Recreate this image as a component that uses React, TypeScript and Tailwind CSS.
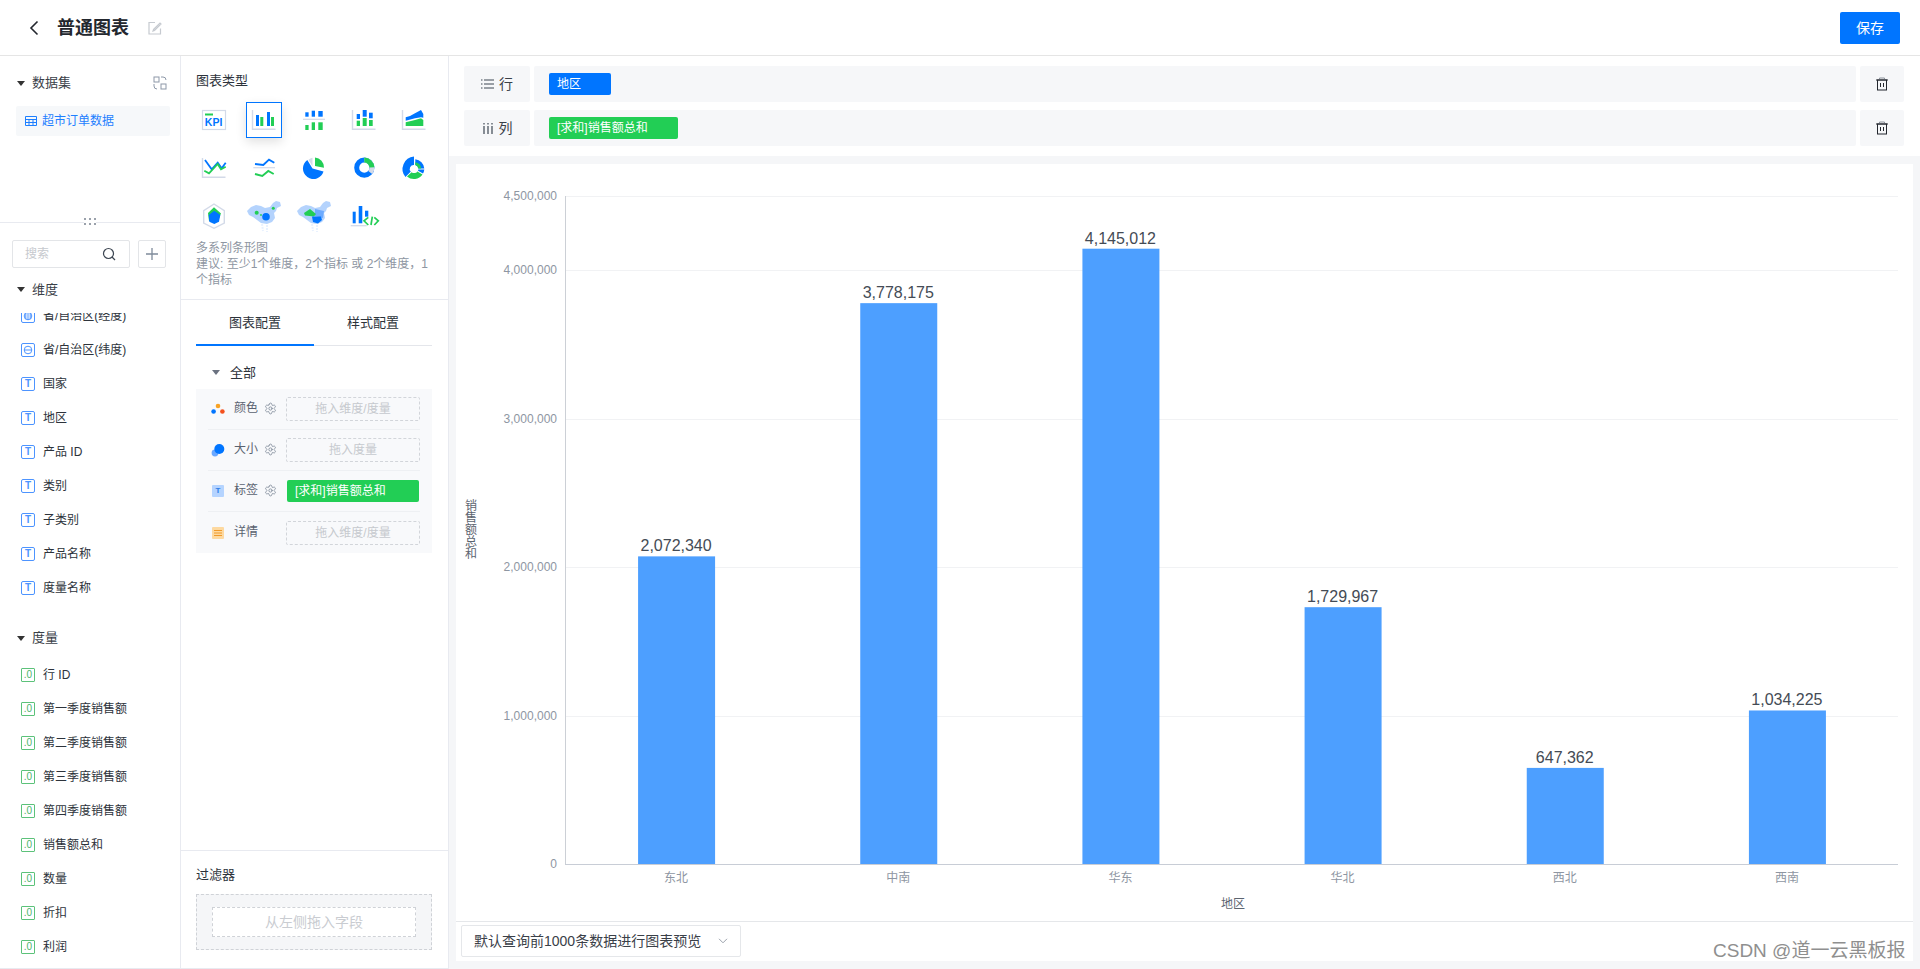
import React from "react";
import { Settings } from "lucide-react";

const B = "#0075ff";
const G = "#22ce55";
const L = "#d3dae8";

function Axis() {
  return <path d="M5.5 6V25.3H28.5" fill="none" stroke={L} strokeWidth="1.4" />;
}

const mapPath = "M0 11L4 7L9 5L14 6L18 8L23 7L26 3L29 1L33 2L34 6L30 8L29 11L27 13L28 18L25 22L20 24L14 23L10 20L6 17L2 15Z";

const chartIcons: React.ReactNode[] = [
  <>
    <rect x="5.5" y="6.5" width="23" height="19" fill="#fff" stroke={L} strokeWidth="1.2" />
    <rect x="8" y="9.5" width="8" height="2" fill={G} />
    <text x="7.8" y="22" fontSize="10.5" fontWeight="700" fill={B} fontFamily="Liberation Sans, sans-serif">KPI</text>
  </>,
  <>
    <Axis />
    <rect x="9" y="11" width="3" height="11" fill={B} />
    <rect x="13.3" y="13" width="3" height="9" fill={G} />
    <rect x="20" y="8" width="3" height="14" fill={B} />
    <rect x="24" y="13" width="3" height="9" fill={G} />
  </>,
  <>
    <rect x="8.3" y="8.3" width="3.3" height="4.4" fill={B} />
    <rect x="14.7" y="6.7" width="3.3" height="6" fill={B} />
    <rect x="21.3" y="7" width="4.4" height="5.7" fill={B} />
    <path d="M6 15.3H28" stroke={L} strokeWidth="1.2" />
    <rect x="8.3" y="21" width="3.3" height="5" fill={G} />
    <rect x="14.7" y="18.3" width="3.3" height="7.7" fill={G} />
    <rect x="21.3" y="18.3" width="4.4" height="7.7" fill={G} />
  </>,
  <>
    <Axis />
    <rect x="9.7" y="10" width="3.3" height="5" fill={B} />
    <rect x="9.7" y="16.7" width="3.3" height="5.3" fill={G} />
    <rect x="15.7" y="6" width="4" height="6.7" fill={B} />
    <rect x="15.7" y="14" width="4" height="8" fill={G} />
    <rect x="22" y="8.7" width="3.7" height="5.6" fill={B} />
    <rect x="22" y="16" width="3.7" height="6" fill={G} />
  </>,
  <>
    <Axis />
    <path d="M8.7 13.3L13 12L18 9.3L24 6L26.3 10V13.7L24 13.3L18 14.3L8.7 16.7Z" fill={B} />
    <path d="M8.7 18.3L18 16L24 14.3L26.3 16V22H8.7Z" fill={G} />
  </>,
  <>
    <Axis />
    <path d="M8 8L14.7 17.3L20.7 10.7L24.7 16.3L28.7 10.7" fill="none" stroke={B} strokeWidth="1.8" />
    <path d="M7.3 18.7L12 21.3L20.7 12L24 17.3L28.7 14.7" fill="none" stroke={G} strokeWidth="1.8" />
  </>,
  <>
    <path d="M8 12L16.3 13L22 7.6L27.3 10.7" fill="none" stroke={B} strokeWidth="1.9" />
    <path d="M6.3 15.7H28" stroke={L} strokeWidth="1.2" />
    <path d="M8 22L15.3 24L21.3 19L26.7 22" fill="none" stroke={G} strokeWidth="1.9" />
  </>,
  <>
    <path d="M15.5 14.5L11.5 7.7A10 10 0 0 1 15.5 5.7Z" fill={L} />
    <path d="M18 14V5.5A10 10 0 0 1 27 15.7Z" fill={G} />
    <path d="M15.5 16.5L26.5 19.5A10.5 10.5 0 1 1 10.3 8Z" fill={B} />
  </>,
  <>
    <g transform="rotate(-90 17.3 15.7)" fill="none" strokeWidth="5">
      <circle cx="17.3" cy="15.7" r="7.6" stroke={B} />
      <circle cx="17.3" cy="15.7" r="7.6" stroke={L} strokeDasharray="17 47.8" />
      <circle cx="17.3" cy="15.7" r="7.6" stroke={G} strokeDasharray="11.5 47.8" />
    </g>
  </>,
  <>
    <path d="M17 4.5A12.5 12.5 0 0 0 8.5 25L13.8 19.6A4 4 0 0 1 17 12.9Z" fill={B} />
    <path d="M10 24.5A10.5 10.5 0 0 0 25.5 22.5L20.4 19.4A4 4 0 0 1 14.6 20.2Z" fill={G} />
    <path d="M18.3 7.3A10 10 0 0 1 27.3 16.5H21.3A4 4 0 0 0 18.3 13Z" fill={B} />
    <path d="M18.3 10.3A7 7 0 0 1 24.2 16.5H21.3A4 4 0 0 0 18.3 13Z" fill={G} />
    <path d="M27.3 17.5A10 10 0 0 1 26 21.5L21 18.7A4 4 0 0 0 21.3 17.5Z" fill={B} />
  </>,
  <>
    <path d="M17 4L27.3 10.7V23L17 28.3L6.7 23V10.7Z" fill="#fff" stroke={L} strokeWidth="1.4" />
    <path d="M17 7.3L24 13.5L22 18L12 21L11 13Z" fill={G} />
    <path d="M17.3 10.7L23.3 15L22 21.7L17.3 24L12.3 21.7L11.7 15Z" fill={B} />
  </>,
  <>
    <path d={mapPath} fill="#b4d3fd" />
    <path d="M15 24L16 31M20 25L20 32" stroke="#e8f1fe" strokeWidth="2" strokeDasharray="2 1" />
    <circle cx="9.7" cy="12.7" r="2" fill={G} />
    <circle cx="26.3" cy="8.3" r="1.5" fill={G} />
    <circle cx="19" cy="16.7" r="3.8" fill={B} />
    <circle cx="14" cy="15" r="0.9" fill={G} />
  </>,
  <>
    <path d={mapPath} fill="#b4d3fd" />
    <path d="M18 9L27 11L26 18L18 16Z" fill="#6dabff" />
    <path d="M7 13L13 9L19 14L17 16.5L8 15.5Z" fill={G} />
    <path d="M15 16.5H24L25 20L21 23.5L16 22Z" fill={B} />
    <path d="M15 24L16 31M20 25L20 32" stroke="#e8f1fe" strokeWidth="2" strokeDasharray="2 1" />
  </>,
  <>
    <rect x="5.7" y="11.7" width="3" height="11.6" fill={B} />
    <rect x="11.7" y="6" width="3.6" height="17.3" fill={B} />
    <rect x="18" y="10.7" width="3.3" height="6" fill={B} />
    <path d="M3.7 25.7H19.7" stroke={L} strokeWidth="1.3" />
    <path d="M21.3 17.3L17 20.8L21.3 25" fill="none" stroke={G} strokeWidth="1.7" />
    <path d="M25.3 16.7L24 25" fill="none" stroke={G} strokeWidth="1.7" />
    <path d="M27.3 17.3L31.3 20.8L27.3 25" fill="none" stroke={G} strokeWidth="1.7" />
  </>,
];

function TypeIcon({ children, active }: { children: React.ReactNode; active?: boolean }) {
  return (
    <div className={`flex h-9 w-9 items-center justify-center ${active ? "border border-[#0075ff] shadow-[0_4px_10px_rgba(0,0,0,0.12)]" : ""}`}>
      <svg viewBox="0 0 34 32" width="34" height="32" className="shrink-0 overflow-visible">{children}</svg>
    </div>
  );
}

function Caret({ className = "" }: { className?: string }) {
  return <span className={`inline-block h-0 w-0 border-x-[4px] border-t-[5px] border-x-transparent border-t-[#333] ${className}`} />;
}

function Trash() {
  return (
    <svg viewBox="0 0 14 14" width="14" height="14" fill="none" stroke="#23272e" strokeWidth="1">
      <path d="M1 3H13" />
      <path d="M4.5 3V1H9.5V3" stroke="#8d939c" />
      <rect x="2.5" y="3" width="9" height="10" />
      <path d="M5.5 6V10M8.5 6V10" />
    </svg>
  );
}

function TIcon() {
  return (
    <span className="flex h-[14px] w-[14px] shrink-0 items-center justify-center rounded-[2px] border border-[#4d94ff] text-[10px] leading-none font-bold text-[#4d94ff]">T</span>
  );
}
function NumIcon() {
  return (
    <span className="flex h-[14px] w-[14px] shrink-0 items-center justify-center rounded-[1px] border border-[#5cc27a] text-[10px] leading-none text-[#4db56c]">.0</span>
  );
}
function GeoIcon({ v }: { v?: boolean }) {
  return (
    <span className="flex h-[14px] w-[14px] shrink-0 items-center justify-center rounded-[2px] border border-[#4d94ff]">
      <svg viewBox="0 0 10 10" width="10" height="10" fill="none" stroke="#4d94ff" strokeWidth="1">
        <circle cx="5" cy="5" r="3.8" />
        {v ? <path d="M5 1.2V8.8M2.8 2V8M7.2 2V8" /> : <path d="M1.2 5H8.8" />}
      </svg>
    </span>
  );
}

function FieldRow({ icon, label }: { icon: React.ReactNode; label: string }) {
  return (
    <div className="flex h-[34px] items-center gap-2 pl-[21px] text-xs text-[#2d333b]">
      {icon}
      <span>{label}</span>
    </div>
  );
}

function ConfigRow({ icon, label, gear, children, last }: { icon: React.ReactNode; label: string; gear?: boolean; children: React.ReactNode; last?: boolean }) {
  return (
    <div className={`mx-3 flex h-[41px] items-center ${last ? "" : "border-b border-[#eef0f3]"}`}>
      <span className="flex w-5 shrink-0 justify-center">{icon}</span>
      <span className="-mt-[2px] ml-[6px] shrink-0 text-xs whitespace-nowrap text-[#5a6270]">{label}</span>
      <span className="-mt-[2px] ml-[5px] flex w-[14px] shrink-0 justify-center">
        {gear ? <Settings size={13} strokeWidth={1.5} color="#7d8796" /> : null}
      </span>
      <div className="ml-[9px] flex h-[24px] w-[134px] shrink-0 items-center justify-center">{children}</div>
    </div>
  );
}

function DropHint({ text }: { text: string }) {
  return (
    <div className="flex h-[24px] w-full items-center justify-center rounded-[2px] border border-dashed border-[#d2d5da] text-xs text-[#c6c9ce]">{text}</div>
  );
}

const bars = [
  { name: "东北", value: 2072340 },
  { name: "中南", value: 3778175 },
  { name: "华东", value: 4145012 },
  { name: "华北", value: 1729967 },
  { name: "西北", value: 647362 },
  { name: "西南", value: 1034225 },
];

const ticks = [0, 1000000, 2000000, 3000000, 4000000, 4500000];

function Chart() {
  const x0 = 109;
  const xEnd = 1442;
  const base = 700;
  const pxPer = 668 / 4500000;
  const step = (xEnd - x0) / 6;
  return (
    <svg viewBox="0 0 1456 757" width="1456" height="757" className="block" fontFamily="Liberation Sans, Noto Sans CJK SC, sans-serif">
      {ticks.map((t) => {
        const y = Math.round(base - t * pxPer) + 0.5;
        return (
          <g key={t}>
            {t > 0 && <line x1={x0} x2={xEnd} y1={y} y2={y} stroke="#f1f2f4" />}
            <text x={x0 - 8} y={y + 3} textAnchor="end" fontSize="12" fill="#8e96a2">{t.toLocaleString("en-US")}</text>
          </g>
        );
      })}
      <line x1={x0 + 0.5} x2={x0 + 0.5} y1={32} y2={base} stroke="#ccd0d6" />
      {bars.map((b, i) => {
        const cx = x0 + step * (i + 0.5);
        const h = b.value * pxPer;
        return (
          <g key={b.name}>
            <rect x={cx - 38} y={base - h} width={77} height={h} fill="#4d9fff" />
            <text x={cx} y={base - h - 5} textAnchor="middle" fontSize="16" fill="#444b55">{b.value.toLocaleString("en-US")}</text>
            <text x={cx} y={718} textAnchor="middle" fontSize="12" fill="#8e96a2">{b.name}</text>
          </g>
        );
      })}
      <line x1={x0} x2={xEnd} y1={base + 0.5} y2={base + 0.5} stroke="#c8cdd6" />
      <text x={777} y={744} textAnchor="middle" fontSize="12" fill="#5c6470">地区</text>
      <g fontSize="12" fill="#5c6470" textAnchor="middle">
        {"销售额总和".split("").map((c, i) => (
          <text key={i} x={15} y={346 + i * 12}>{c}</text>
        ))}
      </g>
    </svg>
  );
}

export default function App() {
  const dims: [React.ReactNode, string][] = [
    [<GeoIcon />, "省/自治区(纬度)"],
    [<TIcon />, "国家"],
    [<TIcon />, "地区"],
    [<TIcon />, "产品 ID"],
    [<TIcon />, "类别"],
    [<TIcon />, "子类别"],
    [<TIcon />, "产品名称"],
    [<TIcon />, "度量名称"],
  ];
  const meas = ["行 ID", "第一季度销售额", "第二季度销售额", "第三季度销售额", "第四季度销售额", "销售额总和", "数量", "折扣", "利润"];
  return (
    <div className="relative flex h-[969px] w-[1920px] flex-col overflow-hidden bg-white font-['Liberation_Sans','Noto_Sans_CJK_SC',sans-serif] text-[#23272e]">
      <header className="flex h-[56px] shrink-0 items-center border-b border-[#e5e5e5] pr-5">
        <svg viewBox="0 0 12 16" width="12" height="16" className="ml-[28px]" fill="none" stroke="#23272e" strokeWidth="1.6">
          <path d="M9.5 1.5L3 8L9.5 14.5" />
        </svg>
        <h1 className="ml-[17px] text-lg leading-none font-bold">普通图表</h1>
        <svg viewBox="0 0 14 14" width="14" height="14" className="ml-[19px]" fill="none" stroke="#c6cad0" strokeWidth="1.2">
          <path d="M12.5 7.5V13H1V1.5H7" />
          <path d="M5.5 8.5L12 2L13 3L6.5 9.5L5 10Z" />
        </svg>
        <button className="ml-auto h-8 w-[60px] rounded-[2px] bg-[#0075ff] text-sm text-white">保存</button>
      </header>

      <div className="flex min-h-0 flex-1">
        <aside className="flex w-[181px] shrink-0 flex-col border-r border-b border-[#e8eaf0]">
          <section className="relative h-[167px] shrink-0 border-b border-[#e8eaf0] px-4 pt-[19px]">
            <div className="flex items-center">
              <Caret className="ml-px" />
              <span className="ml-[7px] text-[13px] leading-[16px] text-[#3a4048]">数据集</span>
              <svg viewBox="0 0 14 14" width="14" height="14" className="-mr-[3px] ml-auto" fill="none" stroke="#8d98a8" strokeWidth="1">
                <rect x="1" y="1" width="5" height="5" />
                <path d="M8 1H10A3 3 0 0 1 13 4M1 8V10A3 3 0 0 0 4 13" />
                <rect x="8" y="8" width="5" height="5" />
              </svg>
            </div>
            <div className="mt-[15px] flex h-[30px] w-[154px] items-center gap-[5px] rounded-[2px] bg-[#f6f8fa] pl-[9px] text-xs text-[#1e7fff]">
              <svg viewBox="0 0 12 10" width="12" height="10" fill="none" stroke="#1e7fff" strokeWidth="1">
                <path d="M.5.5H11.5V9.5H.5ZM.5 3.5H11.5M.5 6.5H11.5M4 3.5V9.5M8 3.5V9.5" />
              </svg>
              超市订单数据
            </div>
            <div className="absolute right-[84px] bottom-[-3px] grid grid-cols-3 gap-x-[3px] gap-y-[3px] bg-white">
              {[0, 1, 2, 3, 4, 5].map((i) => (
                <span key={i} className="h-[2px] w-[2px] bg-[#9aa1ab]" />
              ))}
            </div>
          </section>

          <div className="flex shrink-0 items-center gap-2 pt-[17px] pl-3">
            <div className="flex h-7 w-[118px] items-center justify-between rounded-[2px] border border-[#e3e5e8] pr-[13px] pl-3 text-xs text-[#c6c9ce]">
              搜索
              <svg viewBox="0 0 14 14" width="14" height="14" fill="none" stroke="#3d4652" strokeWidth="1.2">
                <circle cx="6.5" cy="6.5" r="5" />
                <path d="M10 10L13 13" />
              </svg>
            </div>
            <div className="flex h-7 w-7 items-center justify-center rounded-[2px] border border-[#e3e5e8]">
              <svg viewBox="0 0 12 12" width="12" height="12" stroke="#7f8b9b" strokeWidth="1.3"><path d="M6 0V12M0 6H12" /></svg>
            </div>
          </div>

          <div className="flex h-[40px] shrink-0 items-center pt-[3px] pl-[17px]">
            <Caret />
            <span className="ml-[7px] text-[13px] text-[#3a4048]">维度</span>
          </div>

          <div className="mt-[5px] h-[20px] shrink-0 overflow-hidden">
            <div className="-mt-[14px]"><FieldRow icon={<GeoIcon v />} label="省/自治区(经度)" /></div>
          </div>
          <div className="shrink-0">
            {dims.map(([ic, l]) => <FieldRow key={l} icon={ic} label={l} />)}
          </div>

          <div className="mt-[13px] flex h-[40px] shrink-0 items-center pl-[17px]">
            <Caret />
            <span className="ml-[7px] text-[13px] text-[#3a4048]">度量</span>
          </div>
          <div>
            {meas.map((m) => <FieldRow key={m} icon={<NumIcon />} label={m} />)}
          </div>
        </aside>

        <aside className="flex w-[268px] shrink-0 flex-col border-r border-b border-[#e8eaf0]">
          <section className="h-[244px] shrink-0 border-b border-[#e8eaf0] pt-4 pr-4 pl-[15px]">
            <div className="text-[13px] leading-[18px] text-[#2d333b]">图表类型</div>
            <div className="mt-[12px] grid w-[236px] grid-cols-5 justify-items-center gap-x-[14px] gap-y-[12px]">
              {chartIcons.map((c, i) => <TypeIcon key={i} active={i === 1}>{c}</TypeIcon>)}
            </div>
            <p className="mt-[6px] text-xs leading-4 text-[#8e96a2]">
              多系列条形图<br />建议: 至少1个维度，2个指标 或 2个维度，1个指标
            </p>
          </section>

          <section className="min-h-0 flex-1 pr-4 pl-[15px]">
            <div className="flex h-[46px] border-b border-[#e4e6eb] text-[13px] text-[#2d333b]">
              <div className="-mb-px flex w-[118px] items-center justify-center border-b-2 border-[#0075ff] pt-[2px]">图表配置</div>
              <div className="flex w-[118px] items-center justify-center pt-[1px]">样式配置</div>
            </div>
            <div className="flex h-[43px] items-center pt-[10px] pl-4">
              <span className="inline-block h-0 w-0 border-x-[4px] border-t-[5px] border-x-transparent border-t-[#6b7280]" />
              <span className="ml-[10px] text-[13px] text-[#2d333b]">全部</span>
            </div>
            <div className="bg-[#f8f9fb]">
              <ConfigRow
                gear
                label="颜色"
                icon={
                  <svg viewBox="0 0 14 12" width="14" height="12">
                    <circle cx="7" cy="3" r="2.3" fill="#f8a325" /><circle cx="2.6" cy="8.5" r="2.3" fill="#0075ff" /><circle cx="11.4" cy="8.5" r="2.3" fill="#f4511e" />
                  </svg>
                }
              >
                <DropHint text="拖入维度/度量" />
              </ConfigRow>
              <ConfigRow
                gear
                label="大小"
                icon={
                  <svg viewBox="0 0 14 14" width="14" height="14">
                    <circle cx="4" cy="10" r="3.4" fill="#6aa8ff" /><circle cx="8.3" cy="6" r="5" fill="#0075ff" />
                  </svg>
                }
              >
                <DropHint text="拖入度量" />
              </ConfigRow>
              <ConfigRow
                gear
                label="标签"
                icon={
                  <span className="flex h-3 w-3 items-center justify-center rounded-[1px] bg-[#b5d4ff] text-[8px] leading-none font-bold text-[#2f7fe8]">T</span>
                }
              >
                <div className="flex h-[22px] w-[132px] items-center rounded-[2px] bg-[#22ce55] pl-2 text-xs text-white">[求和]销售额总和</div>
              </ConfigRow>
              <ConfigRow
                last
                label="详情"
                icon={
                  <span className="flex h-3 w-3 items-center justify-center rounded-[1px] bg-[#fdd9a0]">
                    <svg viewBox="0 0 8 6" width="8" height="6" stroke="#f09a2a" strokeWidth="1"><path d="M0 .5H8M0 3H8M0 5.5H8" /></svg>
                  </span>
                }
              >
                <DropHint text="拖入维度/度量" />
              </ConfigRow>
            </div>
          </section>

          <section className="h-[118px] shrink-0 border-t border-[#e8eaf0] pt-[16px] pr-4 pl-[15px]">
            <div className="text-[13px] leading-4 text-[#2d333b]">过滤器</div>
            <div className="mt-[11px] flex h-[56px] items-center justify-center border border-dashed border-[#cfd2d7] bg-[#f5f6f8]">
              <div className="flex h-[30px] w-[204px] items-center justify-center border border-dashed border-[#cfd2d7] bg-white text-sm text-[#c9ccd1]">从左侧拖入字段</div>
            </div>
          </section>
        </aside>

        <main className="flex min-w-0 flex-1 flex-col bg-[#f5f6f8]">
          <div className="shrink-0 bg-white pt-[10px] pr-4 pb-[10px] pl-[15px]">
            {[
              { label: "行", tag: "地区", w: "w-[62px]", bg: "bg-[#0075ff]" },
              { label: "列", tag: "[求和]销售额总和", w: "w-[129px]", bg: "bg-[#22ce55]" },
            ].map((r, i) => (
              <div key={r.label} className={`flex h-9 gap-1 ${i ? "mt-2" : ""}`}>
                <div className="flex w-[66px] items-center justify-center gap-[5px] rounded-[2px] bg-[#f6f7f9] text-sm text-[#3a4048]">
                  {i === 0 ? (
                    <svg viewBox="0 0 13 10" width="13" height="10" stroke="#3d4652" strokeWidth="1" fill="none"><path d="M3 1H13M3 5H13M3 9H13M0 1H1.5M0 5H1.5M0 9H1.5" /></svg>
                  ) : (
                    <svg viewBox="0 0 12 12" width="12" height="12" stroke="#3d4652" strokeWidth="1.2" fill="none"><path d="M2 4V12M6 4V12M10 4V12M2 1V2.4M6 1V2.4M10 1V2.4" /></svg>
                  )}
                  {r.label}
                </div>
                <div className="flex flex-1 items-center rounded-[2px] bg-[#f6f7f9] pl-[15px]">
                  <div className={`flex h-[22px] items-center rounded-[2px] pl-2 text-xs text-white ${r.w} ${r.bg}`}>{r.tag}</div>
                </div>
                <div className="flex w-11 items-center justify-center rounded-[2px] bg-[#f6f7f9]"><Trash /></div>
              </div>
            ))}
          </div>
          <div className="mx-[7px] mt-2 flex h-[797px] flex-col bg-white">
            <Chart />
            <div className="flex-1 border-t border-[#e5e7ea] pt-[3px] pl-[5px]">
              <div className="flex h-8 w-[280px] items-center justify-between rounded-[2px] border border-[#e5e7ea] pr-[12px] pl-3 text-sm text-[#3a4048]">
                默认查询前1000条数据进行图表预览
                <svg viewBox="0 0 10 6" width="10" height="6" fill="none" stroke="#9aa1ab" strokeWidth="1"><path d="M1 .8L5 4.8L9 .8" /></svg>
              </div>
            </div>
          </div>
        </main>
      </div>

      <div className="absolute top-[936px] left-[1713px] text-[19px] leading-[30px] text-[#8f8f8f]">CSDN @道一云黑板报</div>
    </div>
  );
}
